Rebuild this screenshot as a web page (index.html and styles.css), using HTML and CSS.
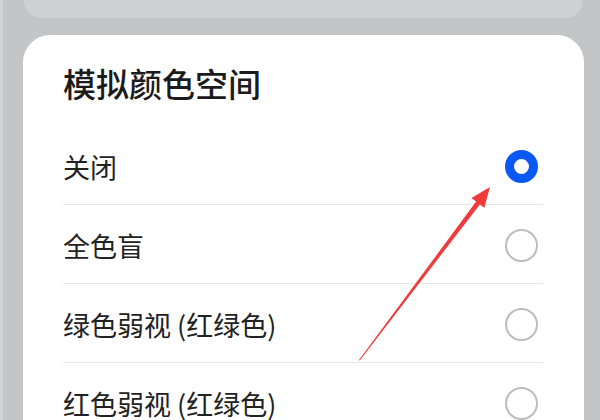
FILE: index.html
```html
<!DOCTYPE html>
<html lang="zh-CN">
<head>
<meta charset="utf-8">
<title>模拟颜色空间</title>
<link rel="stylesheet" href="styles.css">
</head>
<body>
<div class="screen">
  <div class="prev-card"></div>
  <div class="dialog">
    <div class="dialog-title">模拟颜色空间</div>
    <ul class="options">
      <li class="option"><span class="label">关闭</span><span class="radio checked"></span></li>
      <li class="option"><span class="label">全色盲</span><span class="radio"></span></li>
      <li class="option"><span class="label">绿色弱视 (红绿色)</span><span class="radio"></span></li>
      <li class="option"><span class="label">红色弱视 (红绿色)</span><span class="radio"></span></li>
    </ul>
  </div>
  <svg class="arrow" width="600" height="420" viewBox="0 0 600 420" aria-hidden="true">
    <polygon points="359,360 476.1,201.6 471.5,198.1 490,187 484.3,207.7 479.9,204.4 359.8,360.5" fill="#ef3b3b"/>
  </svg>
</div>
</body>
</html>
```
FILE: styles.css
```css
html, body {
  margin: 0;
  padding: 0;
  background: #c4c5c7;
}
.screen {
  position: relative;
  width: 600px;
  height: 420px;
  overflow: hidden;
  font-family: "Noto Sans CJK SC", "Noto Sans", sans-serif;
  box-shadow: inset 3px 0 0 #d2d3d4;
}
.prev-card {
  height: 18px;
  margin: 0 17px 0 24px;
  background: #cfd0d2;
  border-radius: 0 0 22px 22px;
}
.dialog {
  margin: 17px 16px 0 23px;
  background: #ffffff;
  border-radius: 27px 27px 0 0;
  padding: 0 41px 0 40px;
  height: 420px;
}
.dialog-title {
  padding-top: 24px;
  line-height: 48px;
  height: 48px;
  padding-bottom: 19px;
  font-size: 33px;
  font-weight: 500;
  color: #1b1b1b;
}
.options {
  list-style: none;
  margin: 0;
  padding: 0;
}
.option {
  display: flex;
  align-items: center;
  justify-content: space-between;
  padding-top: 2px;
  box-sizing: border-box;
  height: 79px;
  border-bottom: 1px solid #e6e6e6;
}
.label {
  font-size: 27px;
  color: #222222;
}
.radio {
  width: 33px;
  height: 33px;
  box-sizing: border-box;
  border-radius: 50%;
  border: 2px solid #bdbdbd;
  margin-right: 5px;
}
.radio.checked {
  border: 9px solid #0a59f7;
}
.arrow {
  position: absolute;
  top: 0;
  left: 0;
  pointer-events: none;
}
```
